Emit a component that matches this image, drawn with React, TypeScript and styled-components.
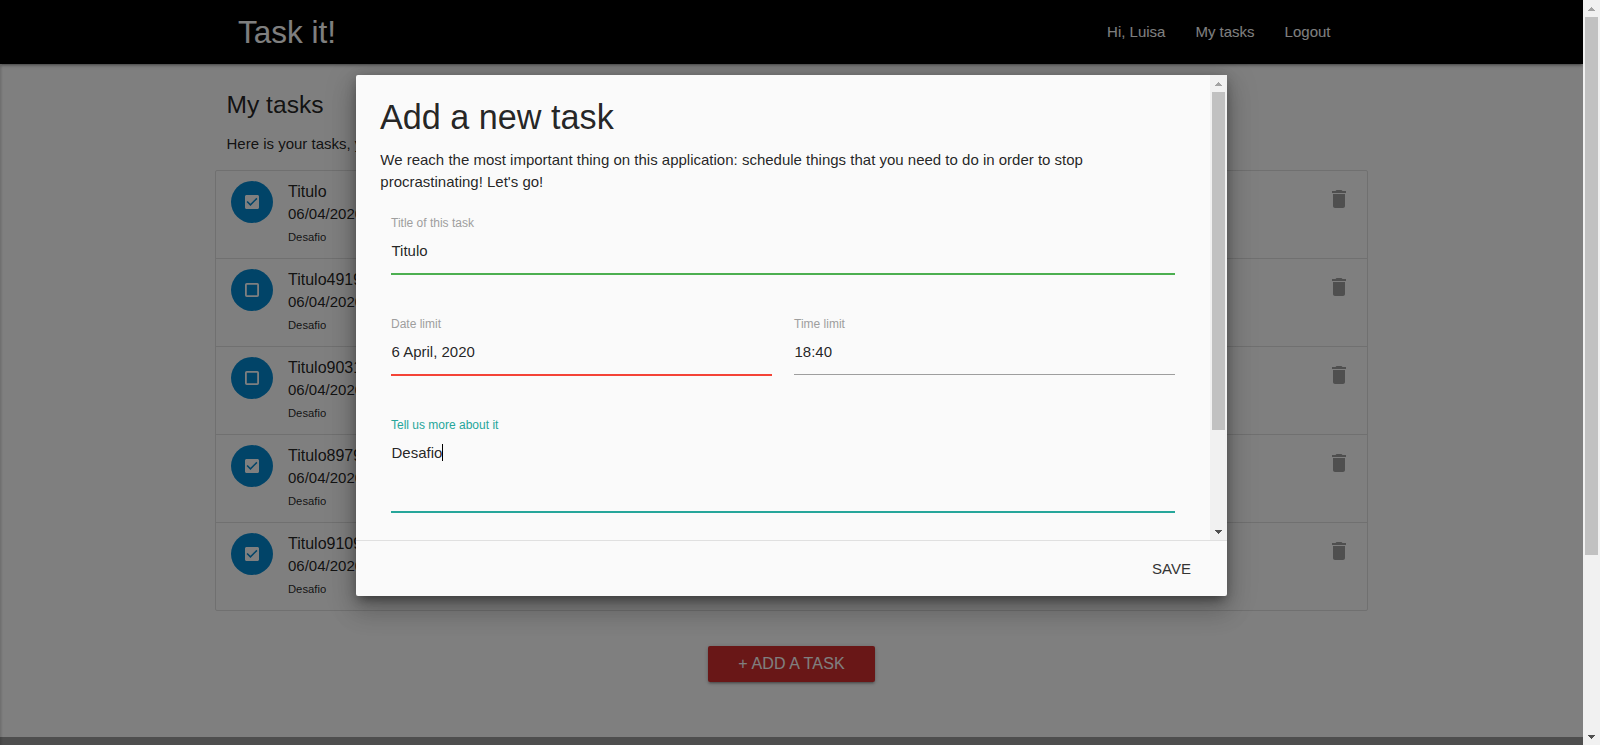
import React from 'react';
import styled, { createGlobalStyle } from 'styled-components';

const GlobalStyle = createGlobalStyle`
  *, *::before, *::after { box-sizing: border-box; }
  html, body { margin: 0; padding: 0; overflow: hidden; }
  body {
    font-family: "Liberation Sans", Arial, sans-serif;
    font-size: 15px;
    line-height: 1.5;
    color: rgba(0, 0, 0, 0.87);
    background: #fff;
  }
  h1, h2, h3, p { margin: 0; font-weight: 400; }
`;

const Window = styled.div`
  display: flex;
  width: 1600px;
  height: 745px;
  overflow: hidden;
`;

const Page = styled.div`
  position: relative;
  display: flex;
  flex-direction: column;
  width: 1583px;
  height: 745px;
  overflow: hidden;
`;

const Nav = styled.header`
  flex: none;
  display: flex;
  justify-content: space-between;
  height: 64px;
  padding: 0 237.5px 0 238px;
  background: #000;
  color: #fff;
  line-height: 64px;
  box-shadow: 0 2px 2px 0 rgba(0, 0, 0, 0.14), 0 3px 1px -2px rgba(0, 0, 0, 0.12),
    0 1px 5px 0 rgba(0, 0, 0, 0.2);
`;

const Logo = styled.a`
  font-size: 31.5px;
`;

const NavLinks = styled.nav`
  display: flex;
`;

const NavLink = styled.a`
  padding: 0 15px;
`;

const Main = styled.main`
  flex: none;
  display: flex;
  flex-direction: column;
  height: 673px;
  padding: 0 215px;
`;

const Intro = styled.div`
  height: 106px;
  padding: 27px 11.5px 0;
`;

const PageTitle = styled.h2`
  font-size: 24.6px;
  line-height: 27px;
  margin-bottom: 15px;
`;

const Collection = styled.ul`
  list-style: none;
  margin: 0;
  padding: 0;
  border: 1px solid #e0e0e0;
  border-radius: 2px;
`;

const Item = styled.li`
  display: flex;
  height: 88px;
  padding: 10px 16px 0 15px;
  border-bottom: 1px solid #e0e0e0;
  &:last-child { border-bottom: 0; height: 87px; }
`;

const Status = styled.span`
  flex: none;
  display: flex;
  align-items: center;
  justify-content: center;
  width: 42px;
  height: 42px;
  margin-right: 15px;
  border-radius: 50%;
  background: #0288d1;
  color: #fff;
`;

const Details = styled.div`
  flex: 1;
`;

const TaskTitle = styled.div`
  font-size: 16px;
  line-height: 22px;
`;

const Due = styled.div`
  line-height: 22px;
`;

const Note = styled.div`
  font-size: 11.25px;
  line-height: 24px;
`;

const TrashButton = styled.span`
  flex: none;
  width: 24px;
  padding-top: 6px;
  color: #9e9e9e;
  svg { display: block; }
`;

const AddButton = styled.button`
  align-self: center;
  width: 167px;
  height: 36px;
  margin-top: 35px;
  padding: 0;
  border: 0;
  border-radius: 2px;
  background: #d32f2f;
  color: #fff;
  font: 16px/36px "Liberation Sans", Arial, sans-serif;
  letter-spacing: 0.15px;
  box-shadow: 0 2px 2px 0 rgba(0, 0, 0, 0.14), 0 3px 1px -2px rgba(0, 0, 0, 0.12),
    0 1px 5px 0 rgba(0, 0, 0, 0.2);
`;

const Footer = styled.footer`
  flex: 1;
  background: #9c9c9c;
`;

const Overlay = styled.div`
  position: absolute;
  inset: 0;
  background: rgba(0, 0, 0, 0.5);
  &::before {
    content: "";
    position: absolute;
    left: 0;
    top: 64px;
    bottom: 0;
    width: 3px;
    background: linear-gradient(to right, rgba(0, 0, 0, 0.14), transparent);
  }
`;

const Modal = styled.section`
  position: absolute;
  left: 356px;
  top: 75px;
  display: flex;
  flex-direction: column;
  width: 871px;
  height: 521px;
  border-radius: 2px;
  background: #fafafa;
  box-shadow: 0 16px 24px 2px rgba(0, 0, 0, 0.14), 0 6px 30px 5px rgba(0, 0, 0, 0.12),
    0 8px 10px -5px rgba(0, 0, 0, 0.3), 0 2px 12px 0 rgba(0, 0, 0, 0.2);
`;

const ModalBody = styled.div`
  flex: none;
  display: flex;
  height: 465px;
`;

const Form = styled.div`
  flex: 1;
  padding: 24px 24px 0;
`;

const ModalTitle = styled.h1`
  font-size: 34.2px;
  line-height: 37.6px;
  margin-bottom: 12px;
`;

const Lead = styled.p`
  height: 60px;
  padding-left: 0.3px;
  line-height: 22.5px;
`;

const FieldRow = styled.div`
  display: flex;
  gap: 22px;
  height: 101px;
  padding: 0 11px;
`;

const Field = styled.div`
  flex: 1;
`;

const Label = styled.div<{ $active?: boolean }>`
  height: 28px;
  font-size: 12px;
  line-height: 28px;
  color: ${(p) => (p.$active ? '#26a69a' : '#9e9e9e')};
`;

const Value = styled.div<{ $line: string; $thick?: boolean; $height?: number }>`
  display: flex;
  height: ${(p) => p.$height ?? 37}px;
  padding-top: 4px;
  padding-left: 0.5px;
  line-height: 20px;
  border-bottom: 1px solid ${(p) => p.$line};
  box-shadow: ${(p) => (p.$thick ? `0 1px 0 0 ${p.$line}` : 'none')};
`;

const Caret = styled.i`
  width: 1px;
  height: 17px;
  margin-top: 1px;
  background: #000;
`;

const ModalFooter = styled.div`
  flex: 1;
  display: flex;
  justify-content: flex-end;
  align-items: center;
  padding: 1px 36px 0 0;
  border-top: 1px solid rgba(0, 0, 0, 0.1);
`;

const SaveButton = styled.a`
  color: #343434;
`;

const Track = styled.div`
  flex: none;
  display: flex;
  flex-direction: column;
  width: 17px;
  padding: 0 2px;
  background: #f1f1f1;
`;

const ArrowBox = styled.div<{ $down?: boolean }>`
  flex: none;
  height: 17px;
  margin-top: ${(p) => (p.$down ? 'auto' : '0')};
  padding: 7px 3px 0;
  svg { display: block; }
`;

const Thumb = styled.div<{ $length: number }>`
  height: ${(p) => p.$length}px;
  background: #c1c1c1;
`;

const Scrollbar = ({ length }: { length: number }) => (
  <Track>
    <ArrowBox>
      <svg width="7" height="4" shapeRendering="crispEdges">
        <path d="M3 0h1v1h1v1h1v1h1v1H0V3h1V2h1V1h1z" fill="#a3a3a3" />
      </svg>
    </ArrowBox>
    <Thumb $length={length} />
    <ArrowBox $down>
      <svg width="7" height="4" shapeRendering="crispEdges">
        <path d="M0 0h7v1H6v1H5v1H4v1H3V3H2V2H1V1H0z" fill="#505050" />
      </svg>
    </ArrowBox>
  </Track>
);

const CheckedIcon = () => (
  <svg width="14" height="14" viewBox="3 3 18 18" fill="currentColor">
    <path d="M19 3H5c-1.11 0-2 .9-2 2v14c0 1.1.89 2 2 2h14c1.11 0 2-.9 2-2V5c0-1.1-.89-2-2-2zm-9 14l-5-5 1.41-1.41L10 14.17l7.59-7.59L19 8l-9 9z" />
  </svg>
);

const UncheckedIcon = () => (
  <svg width="14" height="14" viewBox="0 0 14 14" fill="none" stroke="currentColor">
    <rect x="0.9" y="0.9" width="12.2" height="12.2" rx="0.9" strokeWidth="1.8" />
  </svg>
);

const TrashIcon = () => (
  <svg width="24" height="24" viewBox="0 0 24 24" fill="currentColor">
    <path d="M6 19c0 1.1.9 2 2 2h8c1.1 0 2-.9 2-2V7H6v12zM19 4h-3.5l-1-1h-5l-1 1H5v2h14V4z" />
  </svg>
);

const tasks = [
  { title: 'Titulo', done: true },
  { title: 'Titulo4919', done: false },
  { title: 'Titulo9031', done: false },
  { title: 'Titulo8979', done: true },
  { title: 'Titulo9109', done: true },
];

export default function App() {
  return (
    <Window>
      <GlobalStyle />
      <Page>
        <Nav>
          <Logo>Task it!</Logo>
          <NavLinks>
            <NavLink>Hi, Luisa</NavLink>
            <NavLink>My tasks</NavLink>
            <NavLink>Logout</NavLink>
          </NavLinks>
        </Nav>
        <Main>
          <Intro>
            <PageTitle>My tasks</PageTitle>
            <p>Here is your tasks, you</p>
          </Intro>
          <Collection>
            {tasks.map((t) => (
              <Item key={t.title}>
                <Status>{t.done ? <CheckedIcon /> : <UncheckedIcon />}</Status>
                <Details>
                  <TaskTitle>{t.title}</TaskTitle>
                  <Due>06/04/2020</Due>
                  <Note>Desafio</Note>
                </Details>
                <TrashButton>
                  <TrashIcon />
                </TrashButton>
              </Item>
            ))}
          </Collection>
          <AddButton>+ ADD A TASK</AddButton>
        </Main>
        <Footer />
        <Overlay />
        <Modal>
          <ModalBody>
            <Form>
              <ModalTitle>Add a new task</ModalTitle>
              <Lead>
                We reach the most important thing on this application: schedule things that you need
                to do in order to stop
                <br />
                procrastinating! Let's go!
              </Lead>
              <FieldRow>
                <Field>
                  <Label>Title of this task</Label>
                  <Value $line="#4caf50" $thick>Titulo</Value>
                </Field>
              </FieldRow>
              <FieldRow>
                <Field>
                  <Label>Date limit</Label>
                  <Value $line="#f44336" $thick>6 April, 2020</Value>
                </Field>
                <Field>
                  <Label>Time limit</Label>
                  <Value $line="#9e9e9e">18:40</Value>
                </Field>
              </FieldRow>
              <FieldRow>
                <Field>
                  <Label $active>Tell us more about it</Label>
                  <Value $line="#26a69a" $thick $height={73}>
                    Desafio
                    <Caret />
                  </Value>
                </Field>
              </FieldRow>
            </Form>
            <Scrollbar length={338} />
          </ModalBody>
          <ModalFooter>
            <SaveButton>SAVE</SaveButton>
          </ModalFooter>
        </Modal>
      </Page>
      <Scrollbar length={538} />
    </Window>
  );
}
